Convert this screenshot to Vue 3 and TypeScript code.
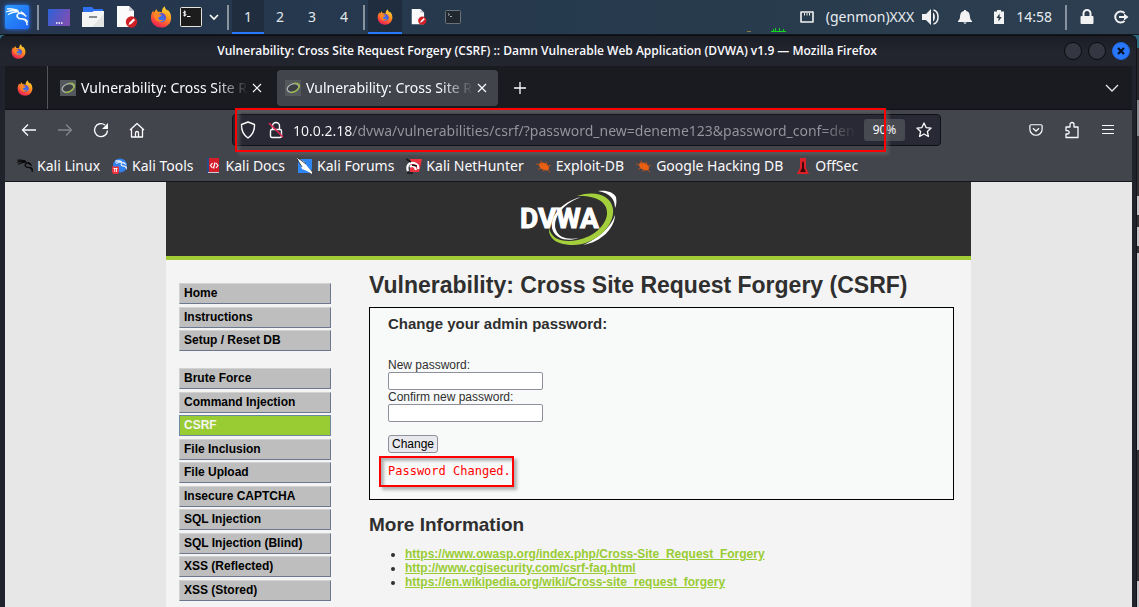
<script setup lang="ts">
import { ref } from 'vue'

interface Bookmark {
  label: string
  icon: string
}

const workspaces: number[] = [1, 2, 3, 4]
const activeWorkspace = ref<number>(1)
const tabs: string[] = ['Vulnerability: Cross Site Request Forgery', 'Vulnerability: Cross Site Request Forgery']
const activeTab = ref<number>(1)
const url = ref<string>('10.0.2.18/dvwa/vulnerabilities/csrf/?password_new=deneme123&password_conf=deneme123&Change=Change')
const newPassword = ref<string>('')
const confirmPassword = ref<string>('')

const bookmarks: Bookmark[] = [
  { label: 'Kali Linux', icon: 'kali' },
  { label: 'Kali Tools', icon: 'tools' },
  { label: 'Kali Docs', icon: 'docs' },
  { label: 'Kali Forums', icon: 'forums' },
  { label: 'Kali NetHunter', icon: 'nethunter' },
  { label: 'Exploit-DB', icon: 'bug' },
  { label: 'Google Hacking DB', icon: 'bug' },
  { label: 'OffSec', icon: 'offsec' },
]

const menuTop: string[] = ['Home', 'Instructions', 'Setup / Reset DB']
const menuMain: string[] = [
  'Brute Force',
  'Command Injection',
  'CSRF',
  'File Inclusion',
  'File Upload',
  'Insecure CAPTCHA',
  'SQL Injection',
  'SQL Injection (Blind)',
  'XSS (Reflected)',
  'XSS (Stored)',
]

const links: string[] = [
  'https://www.owasp.org/index.php/Cross-Site_Request_Forgery',
  'http://www.cgisecurity.com/csrf-faq.html',
  'https://en.wikipedia.org/wiki/Cross-site_request_forgery',
]
</script>

<template>
  <svg class="defs" aria-hidden="true">
    <defs>
      <linearGradient id="fxBody" x1="0.8" y1="0" x2="0.3" y2="1">
        <stop offset="0" stop-color="#ffe23f" />
        <stop offset="0.4" stop-color="#ff9a1f" />
        <stop offset="0.75" stop-color="#ff4a3a" />
        <stop offset="1" stop-color="#e0205c" />
      </linearGradient>
      <linearGradient id="deskGrad" x1="0" y1="0" x2="1" y2="0.4">
        <stop offset="0" stop-color="#2b62d8" />
        <stop offset="1" stop-color="#7a4fb4" />
      </linearGradient>
      <linearGradient id="kaliGrad" x1="0" y1="0" x2="1" y2="1">
        <stop offset="0" stop-color="#2a9bf8" />
        <stop offset="1" stop-color="#1f63f5" />
      </linearGradient>
      <symbol id="firefox" viewBox="0 0 24 24">
        <path d="M12 23.500C5.500 23.500 1 18.700 1 12.600c0-3.300 1.200-5.900 2.700-7.700 0 .9.200 1.700.6 2.300C5.400 6.200 6 4.300 7.200 3.300c0 1.300.8 2.600 2 3.200 1.300-.3 2.800 0 3.600.8 0-3 1-5.500 3.300-7.100.1 2.200 1.300 3.400 3 5.100.1-.5 0-.9-.1-1.400 2.600 2.200 4.100 5.300 4.100 8.800 0 6.200-4.800 10.800-11.100 10.800z" fill="url(#fxBody)" />
        <circle cx="12.300" cy="12.800" r="5" fill="#3d6fe8" />
        <path d="M12.300 7.800c2.800 0 5 2.200 5 5 0 .9-.2 1.700-.6 2.400-.4-3.500-2.500-5.600-6.500-6.900.6-.3 1.300-.5 2.100-.5z" fill="#6a45c9" />
        <path d="M4 8.300c2-.9 4-.6 5.600.8l3.300.5c-.5 1.500-1.900 1.900-3.300 2.500-.9.500-.8 2.500.7 3 2 .8 3.300-.5 4.700 0-1.500 2.300-6 3-8.600.2C4.600 13.500 3.800 10.800 4 8.300z" fill="#ff8425" />
      </symbol>
      <symbol id="dragon" viewBox="0 0 24 24">
        <path d="M12.778 5.943s-1.970-.130-5.327.920c-3.420 1.070-5.360 2.587-5.360 2.587s5.098-2.847 10.852-3.008zm7.351 3.095l.257-.017s-1.468-1.780-4.278-2.648c1.580.642 2.954 1.493 4.021 2.665zm3.868 9.219s.312-3.578-5.310-4.403a18.277 18.277 0 0 0-2.524-.187c-4.506.060-4.670-5.197-1.275-5.462 1.407-.116 3.087.643 4.730 1.408-.007.204.002.385.136.552.134.168.648.350.813.445.164.094.691.430 1.014.850.070-.131.654-.512.654-.512s-.140.003-.465-.119c-.326-.122-.713-.490-.722-.511l-.070-.335c-.058-.058-.445-.716-.454-.730-.085-.077-.500-.010-.500-.010s-.575-.283-.774-.893c.003.107-.099.224 0 .469-.300-.127-.558-.344-.762-.880-.120.305 0 .499 0 .499s-.707-.198-.820-.850c-.124.293 0 .469 0 .469s-1.153-.602-3.069-.610c-1.283-.118-1.550-2.374-1.430-2.754 0 0-1.850-.975-5.493-1.406-3.642-.430-6.628-.065-6.628-.065s6.450-.310 11.617 1.783c.176.785.704 2.094.989 2.723-.815.563-1.733 1.092-1.876 2.970-.143 1.878 1.472 3.530 3.474 3.580 1.900.102 3.214.116 4.806.942 1.520.840 2.766 3.400 2.890 5.703.132-1.709-.509-5.383-3.500-6.498 4.181.732 4.549 3.832 4.549 3.832zM12.680 5.663l-.150-.485s-2.484-.441-5.822-.204C3.370 5.211 0 6.380 0 6.380s6.896-1.735 12.680-.717Z" fill="currentColor" stroke="currentColor" stroke-width="1" />
      </symbol>
      <symbol id="docEdit" viewBox="0 0 22 22">
        <path d="M1 0h12l5 5v16H1z" fill="#fbfbfb" />
        <path d="M13 0l5 5h-5z" fill="#c9ccd0" />
        <circle cx="15.500" cy="16" r="5.700" fill="#d01f25" />
        <path d="M12.500 19l1-2.600 4-4 1.600 1.600-4 4z" fill="#fff" />
      </symbol>
      <symbol id="dvwaIcon" viewBox="0 0 16 16">
        <path d="M0 0h16v16H0z" fill="#54585d" />
        <ellipse cx="8" cy="8" rx="6" ry="4" transform="rotate(-20 8 8)" fill="#3b3f43" stroke="#b4b8b2" stroke-width="1.300" />
        <path d="M9 3.300c4-.6 6.500 1 5 4.200-1.200 2.700-5 5.200-8.500 5.200" fill="none" stroke="#93b544" stroke-width="1.300" />
      </symbol>
      <symbol id="close" viewBox="0 0 10 10">
        <path d="M1 1l8 8M9 1L1 9" fill="none" stroke="currentColor" stroke-width="1.200" />
      </symbol>
    </defs>
  </svg>

  <div class="desktop">
    <header class="panel">
      <button class="pi kali-btn" aria-label="Applications">
        <svg width="26" height="26" viewBox="0 0 26 26">
          <rect x="1" y="1" width="24" height="24" rx="2" fill="url(#kaliGrad)" />
          <use href="#dragon" x="2" y="1" width="22" height="24" />
        </svg>
      </button>
      <i class="sep first"></i>
      <button class="pi" aria-label="Desktop">
        <svg width="22" height="18" viewBox="0 0 22 18">
          <rect width="22" height="17" y="1" fill="url(#deskGrad)" />
          <path d="M8 15h1.500M10.500 15H12M13 15h1.500" stroke="#fff" stroke-width="1.500" />
        </svg>
      </button>
      <button class="pi" aria-label="Files">
        <svg width="22" height="20" viewBox="0 0 22 20">
          <path d="M1 0h9l2 2h9v8H1z" fill="#2f70ee" />
          <path d="M0 5h10l2-1h10v16H0z" fill="#f4f4f4" />
          <path d="M22 7v13H10z" fill="#e4e4e4" />
          <rect x="7" y="9" width="8" height="2" fill="#888c90" />
        </svg>
      </button>
      <button class="pi" aria-label="Text editor">
        <svg width="22" height="22"><use href="#docEdit" /></svg>
      </button>
      <button class="pi" aria-label="Firefox">
        <svg width="22" height="22"><use href="#firefox" /></svg>
      </button>
      <button class="pi term" aria-label="Terminal">
        <svg width="22" height="20" viewBox="0 0 22 20">
          <rect x="0.500" y="0.500" width="21" height="19" rx="1" fill="#1c1c1c" stroke="#e8e4dc" />
          <path d="M6 5.200C4.700 4.300 3.300 4.800 3.400 5.700c.1 1.100 2.500.7 2.600 1.900.1 1-1.500 1.300-2.700.5M4.700 3.500v6M7 9.500h3.500" fill="none" stroke="#fff" stroke-width="1" />
        </svg>
      </button>
      <button class="pi chev" aria-label="More terminals">
        <svg width="10" height="8" viewBox="0 0 10 8"><path d="M1 2l4 4 4-4" fill="none" stroke="#fff" stroke-width="1.600" /></svg>
      </button>
      <i class="sep"></i>
      <nav class="workspaces" aria-label="Workspaces">
        <button v-for="n in workspaces" :key="n" class="ws" :class="{ on: n === activeWorkspace }" @click="activeWorkspace = n">{{ n }}</button>
      </nav>
      <i class="sep"></i>
      <button class="pi task on" aria-label="Firefox window">
        <svg width="16" height="16"><use href="#firefox" /></svg>
      </button>
      <button class="pi task" aria-label="Editor window">
        <svg width="16" height="16"><use href="#docEdit" /></svg>
      </button>
      <button class="pi task" aria-label="Terminal window">
        <svg width="16" height="14" viewBox="0 0 16 14">
          <rect x="0.500" y="0.500" width="15" height="13" rx="1" fill="#22282f" stroke="#6b7178" />
          <path d="M3 3.500l1.500 1L3 5.500M5 6.500h2" fill="none" stroke="#a9adb2" />
        </svg>
      </button>
      <div class="tray">
        <svg class="graph" width="40" height="6" viewBox="0 0 40 6">
          <path d="M0 3.500h4" stroke="#8b7a3d" />
          <path d="M24 3.500h15M26.500 1v3M28.500 0v4M32.500 0v4M36.500 1v3" stroke="#11d81c" />
        </svg>
        <svg class="net" width="14" height="13" viewBox="0 0 14 13">
          <path d="M1 1h12v10H1z" fill="none" stroke="#f2f2f2" stroke-width="1.600" stroke-linejoin="round" />
          <path d="M4.500 2v2.500M7 2v2.500M9.500 2v2.500" stroke="#f2f2f2" />
        </svg>
        <span class="genmon">(genmon)XXX</span>
        <svg class="spk" width="18" height="16" viewBox="0 0 18 16">
          <path d="M0 5h4l5-5v16l-5-5H0z" fill="#f2f2f2" />
          <path d="M11 3.500c2.500 1.500 2.500 7.500 0 9z" fill="#f2f2f2" />
          <path d="M11.500 1c6 1.500 6 12.500 0 14" fill="none" stroke="#f2f2f2" stroke-width="1.500" />
        </svg>
        <svg class="bell" width="14" height="14" viewBox="0 0 14 14">
          <path d="M6 0h2v1c3 .5 3.800 3 4 6 .1 2 .9 3 2 4v1H0v-1c1.100-1 1.900-2 2-4 .2-3 1-5.500 4-6zM5 12.500h4L7 14z" fill="#f2f2f2" />
        </svg>
        <svg class="bat" width="10" height="14" viewBox="0 0 10 14">
          <path d="M3 0h4v1.500h3V14H0V1.500h3z" fill="#f2f2f2" />
          <path d="M5.500 3.500L2.500 8h2v3.500l3.200-4.500h-2z" fill="#2a3b4a" />
        </svg>
        <time class="clock">14:58</time>
        <i class="sep"></i>
        <button class="pi" aria-label="Lock">
          <svg width="14" height="16" viewBox="0 0 14 16">
            <path d="M3.500 7V4.500a3.500 3.500 0 0 1 7 0V7" fill="none" stroke="#f2f2f2" stroke-width="2" />
            <rect x="0.500" y="7" width="13" height="8" rx="1" fill="#f2f2f2" />
          </svg>
        </button>
        <button class="pi" aria-label="Log out">
          <svg width="16" height="14" viewBox="0 0 16 14">
            <path d="M11.500 3A5.500 5.500 0 1 0 11.500 11" fill="none" stroke="#f2f2f2" stroke-width="2" />
            <path d="M6 6h5V3.500L15.500 7 11 10.500V8H6z" fill="#f2f2f2" />
          </svg>
        </button>
      </div>
    </header>

    <section class="window">
      <div class="titlebar">
        <svg width="15" height="15"><use href="#firefox" /></svg>
        <span class="wtitle">Vulnerability: Cross Site Request Forgery (CSRF) :: Damn Vulnerable Web Application (DVWA) v1.9 — Mozilla Firefox</span>
        <div class="wbtns">
          <button aria-label="Minimize"></button>
          <button aria-label="Maximize"></button>
          <button class="x" aria-label="Close">
            <svg width="8" height="8" viewBox="0 0 8 8"><path d="M1 1l6 6M7 1L1 7" stroke="#0b1020" stroke-width="2.200" /></svg>
          </button>
        </div>
      </div>

      <div class="browser">
        <div class="tabbar">
          <button class="pinned" aria-label="Firefox View">
            <svg width="16" height="16"><use href="#firefox" /></svg>
          </button>
          <div v-for="(t, i) in tabs" :key="i" class="tab" :class="{ on: i === activeTab }" @click="activeTab = i">
            <svg width="16" height="16"><use href="#dvwaIcon" /></svg>
            <span class="tlabel">{{ t }}</span>
            <button aria-label="Close tab"><svg width="10" height="10"><use href="#close" /></svg></button>
          </div>
          <button class="plus" aria-label="New tab">
            <svg width="12" height="12" viewBox="0 0 12 12"><path d="M6 0v12M0 6h12" stroke="#fbfbfe" stroke-width="1.300" /></svg>
          </button>
          <button class="alltabs" aria-label="List all tabs">
            <svg width="14" height="8" viewBox="0 0 14 8"><path d="M1 1l6 6 6-6" fill="none" stroke="#e8e8ec" stroke-width="1.300" /></svg>
          </button>
        </div>

        <div class="navbar">
          <button aria-label="Back">
            <svg width="16" height="16" viewBox="0 0 16 16"><path d="M15 8H1.500M7 2.500L1.500 8 7 13.500" fill="none" stroke="#fbfbfe" stroke-width="1.300" /></svg>
          </button>
          <button aria-label="Forward" disabled>
            <svg width="16" height="16" viewBox="0 0 16 16"><path d="M1 8h13.500M9 2.500L14.500 8 9 13.500" fill="none" stroke="#85868c" stroke-width="1.300" /></svg>
          </button>
          <button aria-label="Reload">
            <svg width="16" height="16" viewBox="0 0 16 16"><path d="M14.500 8.500A6.500 6.500 0 1 1 12 3" fill="none" stroke="#fbfbfe" stroke-width="1.400" /><path d="M15 1v6H9z" fill="#fbfbfe" /></svg>
          </button>
          <button aria-label="Home">
            <svg width="16" height="16" viewBox="0 0 16 16"><path d="M1 8l7-6.500L15 8M2.500 7v8h11V7M6.500 15v-4a1.500 1.500 0 0 1 3 0v4" fill="none" stroke="#fbfbfe" stroke-width="1.300" stroke-linejoin="round" /></svg>
          </button>
          <div class="urlbar">
            <svg width="16" height="18" viewBox="0 0 16 18"><path d="M8 1l6.500 2.500c.3 6-1.500 10-6.500 13.500C3 13.500 1.200 9.500 1.500 3.500z" fill="none" stroke="#fbfbfe" stroke-width="1.400" stroke-linejoin="round" /></svg>
            <svg class="insecure" width="16" height="18" viewBox="0 0 16 18">
              <rect x="2.500" y="8.500" width="11" height="8" rx="1.500" fill="none" stroke="#fbfbfe" stroke-width="1.400" />
              <path d="M4.500 8V5a3.500 3.500 0 0 1 7 0v3" fill="none" stroke="#fbfbfe" stroke-width="1.400" />
              <path d="M1 2l14 14" stroke="#e22850" stroke-width="1.600" />
            </svg>
            <input v-model="url" class="url" type="text" aria-label="Address" spellcheck="false" />
            <button class="zoomlvl">90%</button>
            <button class="star" aria-label="Bookmark this page">
              <svg width="16" height="16" viewBox="0 0 16 16"><path d="M8 1l2.100 4.600 5 .5-3.700 3.400 1 5L8 12l-4.400 2.500 1-5L.9 6.100l5-.5z" fill="none" stroke="#fbfbfe" stroke-width="1.300" stroke-linejoin="round" /></svg>
            </button>
            <span class="mark url-mark"></span>
          </div>
          <div class="navright">
            <button aria-label="Save to Pocket">
              <svg width="14" height="14" viewBox="0 0 16 14"><path d="M2.500 1h11A1.500 1.500 0 0 1 15 2.500V6A7 7 0 0 1 1 6V2.500A1.500 1.500 0 0 1 2.500 1z" fill="none" stroke="#fbfbfe" stroke-width="1.400" /><path d="M4.500 5L8 8.200 11.500 5" fill="none" stroke="#fbfbfe" stroke-width="1.400" /></svg>
            </button>
            <button aria-label="Extensions">
              <svg width="16" height="18" viewBox="0 0 16 18"><path d="M2 6h4V3.500a2 2 0 0 1 4 0V6h4v10.500H2V13h1.500a1.700 1.700 0 0 0 0-3.400H2z" fill="none" stroke="#fbfbfe" stroke-width="1.300" stroke-linejoin="round" /></svg>
            </button>
            <button aria-label="Menu">
              <svg width="12" height="12" viewBox="0 0 12 12"><path d="M0 1.500h12M0 5.500h12M0 9.500h12" stroke="#fbfbfe" stroke-width="1.200" /></svg>
            </button>
          </div>
        </div>

        <nav class="bookmarks" aria-label="Bookmarks">
          <a v-for="b in bookmarks" :key="b.label" href="#">
            <svg width="16" height="16" viewBox="0 0 16 16">
              <use v-if="b.icon === 'kali'" href="#dragon" class="black" width="16" height="16" />
              <g v-else-if="b.icon === 'tools'">
                <circle cx="8" cy="7.500" r="7" fill="#3280ee" />
                <use href="#dragon" class="white" x="3" y="1" width="12" height="12" />
                <path d="M0 8.500h7v5L6 16H1l-1-2.500z" fill="#e8333c" />
                <path d="M1.500 10.500h4M2.700 10.500V14M4.500 10.500V14" stroke="#fff" stroke-width="0.900" />
              </g>
              <g v-else-if="b.icon === 'docs'">
                <rect x="1" y="0" width="12" height="15" fill="#d61f2b" />
                <rect x="1" y="0" width="2" height="15" fill="#264b86" />
                <path d="M2 14.500h11" stroke="#c9ccd2" />
                <path d="M6.500 5L4.500 7.500l2 2.500M10 5l2 2.500-2 2.500M9 4.500l-1.500 6" fill="none" stroke="#fff" stroke-width="1.200" />
              </g>
              <g v-else-if="b.icon === 'forums'">
                <path d="M1 1h14v10l-3 4H1z" fill="#2d86f2" />
                <path d="M0 0l7 3.500 3 4.500 5 6v2l-5-3-5-2-2-5z" fill="#fff" />
                <path d="M0 1l5 8M1 0l8 6" stroke="#1a1c20" stroke-width="0.800" />
              </g>
              <g v-else-if="b.icon === 'nethunter'">
                <path d="M4 1h12l-3 13H4z" fill="#ec3340" />
                <path d="M2 13c-2-5 1-9 6-8 3 .6 5 3 4 6M4 9c2-2 5-1 6 3" fill="none" stroke="#fff" stroke-width="2.200" />
                <path d="M0 1l5 3M6 7l5 1M1 15h6" stroke="#16171a" stroke-width="1.500" />
              </g>
              <g v-else-if="b.icon === 'bug'">
                <ellipse cx="8" cy="8.500" rx="5.500" ry="3.300" transform="rotate(28 8 8.500)" fill="#ea6012" />
                <path d="M0 6l4 1M5 2.500l1 4M10 3.500l1 3.500M12 8l3-.5M5 10l-3 1.500M8 11l-1 2.500M12 12l2 2.500" stroke="#b5501b" stroke-width="1" />
              </g>
              <g v-else>
                <path d="M5 0h6v10l3 6H2l3-6z" fill="#dd2028" />
                <path d="M8 3l1 2v5l2 4H5l2-4V5z" fill="#3a090c" />
              </g>
            </svg>
            <span>{{ b.label }}</span>
          </a>
        </nav>

        <div class="page">
          <div class="dvwa">
            <div class="banner">
              <svg width="100" height="60" viewBox="0 0 100 60" role="img" aria-label="DVWA">
                <path d="M62 9C43 16 33 31 37 42c3 8 12 10 23 8-12 4-22 1-26-7C29 31 41 14 62 9z" fill="#fff" />
                <path d="M79 3c9-1 15 1 18 6 1 5 0 9-1 11 0-9-5-15-17-17zM96 27c0 12-13 27-32 30 10-4 27-15 32-30z" fill="#fff" />
                <path d="M58 8c18-6 34-1 36 13 2 17-18 36-40 36-15 0-25-6-24-17 2 9 9 13 20 13 20 0 37-14 38-27 1-12-11-19-30-18z" fill="#a3cf3c" />
                <text x="1" y="40" class="logo-text">DVWA</text>
              </svg>
            </div>
            <div class="cols">
              <nav class="side" aria-label="Main menu">
                <ul class="top">
                  <li v-for="m in menuTop" :key="m"><a href="#">{{ m }}</a></li>
                </ul>
                <ul class="main">
                  <li v-for="m in menuMain" :key="m" :class="{ on: m === 'CSRF' }"><a href="#">{{ m }}</a></li>
                </ul>
              </nav>
              <main class="content">
                <h1>Vulnerability: Cross Site Request Forgery (CSRF)</h1>
                <div class="box">
                  <h3>Change your admin password:</h3>
                  <form @submit.prevent>
                    <label for="pw-new">New password:</label>
                    <input id="pw-new" v-model="newPassword" type="password" autocomplete="off" />
                    <label for="pw-conf">Confirm new password:</label>
                    <input id="pw-conf" v-model="confirmPassword" type="password" autocomplete="off" />
                    <button type="submit">Change</button>
                  </form>
                  <p class="result">Password Changed.<span class="mark result-mark"></span></p>
                </div>
                <h2>More Information</h2>
                <ul class="links">
                  <li v-for="l in links" :key="l"><a :href="l">{{ l }}</a></li>
                </ul>
              </main>
            </div>
          </div>
        </div>
      </div>
    </section>
  </div>
</template>

<style>
body {
  background: #20222c;
}
</style>

<style scoped>
* {
  box-sizing: border-box;
}
.defs {
  position: absolute;
  width: 0;
  height: 0;
}
.desktop {
  height: 100vh;
  display: flex;
  flex-direction: column;
  overflow: hidden;
  font: 14px/20px "Noto Sans", "Open Sans", sans-serif;
  color: #fbfbfe;
  background: linear-gradient(
    #2c6a80 48px,
    #26282c 48px 100px,
    #84888a 100px 136px,
    #333 136px 196px,
    #c4c4c4 196px 215px,
    #333 215px 227px,
    #c4c4c4 227px 246px,
    #333 246px 253px,
    #c4c4c4 253px 450px,
    #333 450px 581px,
    #c4c4c4 581px
  );
}
button {
  display: flex;
  align-items: center;
  justify-content: center;
  padding: 0;
  border: 0;
  background: none;
  color: inherit;
  font: inherit;
}
svg {
  display: block;
  flex: none;
}

/* Desktop panel */
.panel {
  flex: none;
  display: flex;
  align-items: center;
  height: 35px;
  padding-left: 1px;
  background: linear-gradient(90deg, #25364e, #263a4d 50%, #2d3f50);
  border-bottom: 1px solid #14171d;
}
.panel .pi {
  flex: none;
  width: 34px;
  height: 34px;
}
.panel .kali-btn {
  width: 32px;
  color: #fff;
  filter: drop-shadow(0 0 2px #2777ff);
}
.panel .term {
  width: 26px;
}
.panel .chev {
  width: 20px;
}
.sep {
  flex: none;
  width: 2px;
  height: 25px;
  margin: 0 3px;
  background: #8993a0;
}
.sep.first {
  margin: 0 3px 0 4px;
}
.workspaces {
  display: flex;
}
.ws {
  width: 32px;
  height: 34px;
  color: #e3e7ec;
}
.ws.on,
.task.on {
  background: #1f2d3f;
  box-shadow: inset 0 -2px #2777ff;
}
.tray {
  margin-left: auto;
  padding-right: 1px;
  display: flex;
  align-items: center;
  color: #e8ebef;
}
.graph {
  align-self: flex-end;
  margin: 0 13px 0 0;
}
.genmon {
  margin: 0 8px 0 12px;
}
.bell {
  margin-left: 18px;
}
.bat {
  margin: 0 12px 0 22px;
}
.tray .sep {
  margin: 0 3px 0 13px;
}

/* Browser window */
.window {
  flex: 1;
  min-height: 0;
  display: flex;
  flex-direction: column;
  margin-right: 2px;
  border-top: 1px solid #0b0d12;
  border-right: 1px solid #11141b;
  border-radius: 6px 6px 0 0;
  background: #20222c;
}
.titlebar {
  flex: none;
  display: flex;
  align-items: center;
  height: 30px;
  padding: 0 6px 0 11px;
  background: linear-gradient(#1c1e26, #22242e 50%);
  border-radius: 6px 6px 0 0;
}
.wtitle {
  flex: 1;
  min-width: 0;
  padding-left: 4px;
  text-align: center;
  font-family: "Open Sans", "Noto Sans", sans-serif;
  font-weight: 600;
  font-size: 12px;
  white-space: nowrap;
  overflow: hidden;
}
.wbtns {
  display: flex;
  gap: 6px;
}
.wbtns button {
  width: 18px;
  height: 18px;
  border-radius: 50%;
  background: #343641;
  border: 1px solid #0a0b10;
}
.wbtns .x {
  background: #2777ff;
  border-color: #2368dd;
}
.browser {
  flex: 1;
  min-height: 0;
  display: flex;
  flex-direction: column;
  margin: 0 4px 0 5px;
}
.tabbar {
  flex: none;
  display: flex;
  align-items: center;
  height: 44px;
  background: #1a1b20;
  border-bottom: 1px solid #101116;
}
.pinned {
  width: 43px;
  height: 43px;
  margin-right: 4px;
  border-right: 1px solid #55565c;
}
.pinned svg {
  margin-right: 3px;
}
.tab {
  display: flex;
  align-items: center;
  width: 221px;
  height: 36px;
  padding: 0 11px 0 8px;
  margin-right: 4px;
  border-radius: 4px;
}
.tab.on {
  background: #42444b;
}
.tlabel {
  flex: 1;
  min-width: 0;
  margin: 0 4px 0 5px;
  line-height: 22px;
  overflow: hidden;
  white-space: nowrap;
  mask-image: linear-gradient(90deg, #000 calc(100% - 32px), transparent);
}
.plus {
  width: 36px;
  height: 36px;
}
.alltabs {
  width: 36px;
  height: 36px;
  margin: 0 2px 0 auto;
}
.navbar {
  flex: none;
  display: flex;
  align-items: center;
  height: 40px;
  padding-left: 6px;
  background: #43454c;
}
.navbar button {
  flex: none;
  width: 36px;
  height: 32px;
}
.urlbar {
  position: relative;
  flex: 0 1 709px;
  display: flex;
  align-items: center;
  height: 32px;
  margin-left: 77px;
  padding: 0 1px 0 7px;
  background: #282934;
  border: 1px solid #101116;
  border-radius: 4px;
}
.insecure {
  margin: 0 9px 0 12px;
}
.url {
  flex: 1;
  min-width: 0;
  height: 28px;
  padding: 0;
  border: 0;
  outline: 0;
  font: inherit;
  color: transparent;
  background: linear-gradient(90deg, #fbfbfe 60px, #95969f 60px);
  background-clip: text;
  -webkit-background-clip: text;
  mask-image: linear-gradient(90deg, #000 calc(100% - 36px), transparent);
}
.navbar .zoomlvl {
  width: 41px;
  height: 22px;
  margin: 0 4px 0 7px;
  border-radius: 3px;
  background: #484a52;
  font-size: 12px;
}
.navbar .star {
  width: 30px;
}
.mark {
  position: absolute;
  border: 2px solid #f00;
  pointer-events: none;
  box-shadow: 3px 3px 3px rgba(110, 110, 110, 0.5), inset 3px 3px 3px rgba(110, 110, 110, 0.5);
}
.url-mark {
  inset: -7px 54px -7px 2px;
}
.navright {
  display: flex;
  margin-left: auto;
  padding-right: 6px;
}
.bookmarks {
  flex: none;
  display: flex;
  align-items: center;
  gap: 12px;
  height: 32px;
  padding: 1px 12px 0;
  background: #43454c;
  border-bottom: 1px solid #15161a;
}
.bookmarks a {
  display: flex;
  align-items: center;
  gap: 4px;
  color: #fbfbfe;
  text-decoration: none;
  white-space: nowrap;
}
.black {
  color: #050505;
}
.white {
  color: #fff;
}

/* Page */
.page {
  flex: 1;
  min-height: 0;
  overflow: hidden;
  background: #e7e7e7;
  color: #2f2f2f;
  font: 12px/14px "Liberation Sans", Arial, sans-serif;
}
.dvwa {
  max-width: 805px;
  min-height: 100%;
  margin: 0 auto;
  background: #f4f4f4;
}
.banner {
  display: flex;
  justify-content: center;
  height: 78px;
  padding-top: 6px;
  background: #2f2f2f;
  border-bottom: 4px solid #a1cc33;
}
.logo-text {
  font: 700 28px Roboto, "Open Sans", sans-serif;
  fill: #fff;
  stroke: #fff;
  stroke-width: 1px;
}
.cols {
  display: flex;
  gap: 38px;
  padding: 0 17px 0 13px;
}
.side {
  flex: none;
  width: 152px;
  padding-top: 23px;
}
.side ul {
  display: flex;
  flex-direction: column;
  justify-content: space-between;
  margin: 0 0 17px;
  padding: 0;
  list-style: none;
}
.top {
  height: 68px;
}
.main {
  height: 233px;
}
.side li {
  height: 21px;
  padding-left: 4px;
  background: #bebebe;
  border: 1px solid #d2d2d2;
  border-right-color: #6b7890;
  border-bottom-color: #6b7890;
}
.side li.on {
  background: #9c3;
  border-color: #6b88a0;
}
.side a {
  display: block;
  line-height: 19px;
  font-weight: 700;
  color: #000;
  text-decoration: none;
}
.side .on a {
  color: #f4f4f4;
}
.content {
  flex: 1;
  min-width: 0;
}
h1,
h2,
h3 {
  margin: 0;
  font-weight: 700;
}
h1 {
  padding: 11px 0 8px;
  font-size: 23px;
  line-height: 28px;
}
.box {
  height: 193px;
  padding: 7px 18px;
  background: #f8fafa;
  border: 1px solid #000;
}
h3 {
  font-size: 15px;
  line-height: 18px;
}
form {
  display: flex;
  flex-direction: column;
  align-items: flex-start;
  padding-top: 25px;
}
form input {
  width: 155px;
  height: 18px;
  padding: 1px 2px;
  border: 1px solid #8f8f9d;
  border-radius: 2px;
  background: #fff;
}
form button {
  width: 50px;
  height: 18px;
  margin-top: 13px;
  border: 1px solid #8f8f9d;
  border-radius: 3px;
  background: #e9e9ed;
  color: #000;
}
.result {
  position: relative;
  width: max-content;
  margin: 10px 0 0;
  font: 12px/16px "DejaVu Sans Mono", monospace;
  color: #f00;
}
.result-mark {
  inset: -7px -3px -8px -9px;
}
h2 {
  padding: 14px 0 11px;
  font-size: 19px;
  line-height: 22px;
}
.links {
  margin: 0;
  padding: 0 0 0 36px;
}
.links a {
  font-weight: 700;
  color: #9c3;
}
</style>
